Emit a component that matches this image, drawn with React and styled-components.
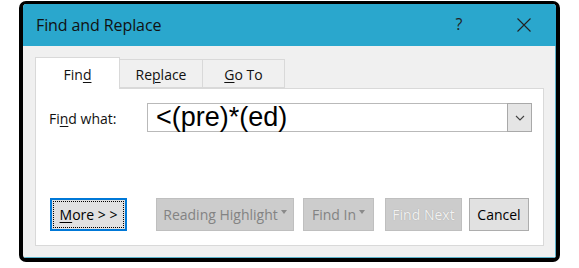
import React from 'react';
import styled, { createGlobalStyle } from 'styled-components';

const Global = createGlobalStyle`
  html, body { margin: 0; padding: 0; background: #fff; }
  body { font-family: "Open Sans", "Noto Sans", sans-serif; color: #000; }
  * { box-sizing: border-box; }
`;

const Page = styled.div`
  width: 579px;
  height: 268px;
  padding: 1px 0 0 19px;
`;

const Dialog = styled.div`
  width: 541px;
  height: 261px;
  border: 4px solid #000;
  border-top-width: 3px;
  border-radius: 7px;
  background: #f0f0f0;
  display: flex;
  flex-direction: column;
  overflow: hidden;
`;

const TitleBar = styled.div`
  height: 42px;
  flex: none;
  background: #2aa7cd;
  display: flex;
  align-items: center;
  padding-left: 13px;
`;

const Title = styled.div`
  flex: 1;
  font-size: 16px;
  color: #111;
  letter-spacing: -0.1px;
  padding-bottom: 1px;
`;

const Help = styled.div`
  font-size: 16px;
  color: #222;
  width: 10px;
  text-align: center;
  margin-right: 53px;
  padding-bottom: 2px;
`;

const CloseIcon = styled.svg`
  width: 14px;
  height: 14px;
  margin-right: 25px;
  display: block;
`;

const Body = styled.div`
  flex: 1;
  display: flex;
  flex-direction: column;
  padding: 11px 11px 11px 12px;
  border-right: 1px solid #5cb3cc;
  border-bottom: 1px solid #5cb3cc;
`;

const TabRow = styled.div`
  display: flex;
  align-items: flex-end;
  height: 31px;
  flex: none;
`;

const Tab = styled.div`
  width: ${p => p.$w}px;
  height: ${p => (p.$active ? 32 : 29)}px;
  margin-bottom: ${p => (p.$active ? -1 : 0)}px;
  position: relative;
  z-index: ${p => (p.$active ? 1 : 0)};
  background: ${p => (p.$active ? '#fff' : '#f0f0f0')};
  border: 1px solid #d9d9d9;
  border-left-width: ${p => (p.$first ? 1 : 0)}px;
  border-bottom-width: ${p => (p.$active ? 0 : 1)}px;
  display: flex;
  align-items: center;
  justify-content: center;
  font-size: 14px;
  padding-top: ${p => (p.$active ? 1 : 2)}px;
  color: #111;
`;

const Accel = styled.span`
  text-decoration: underline;
  text-underline-offset: 2px;
  text-decoration-thickness: 1px;
`;

const Panel = styled.div`
  flex: 1;
  background: #fff;
  border: 1px solid #d9d9d9;
  display: flex;
  flex-direction: column;
`;

const FindRow = styled.div`
  display: flex;
  align-items: center;
  padding: 14px 11px 0 13px;
`;

const Label = styled.div`
  width: 98px;
  font-size: 14px;
  color: #111;
  padding-top: 1px;
`;

const Combo = styled.div`
  flex: 1;
  height: 29px;
  display: flex;
  border: 1px solid #b9b9b9;
  background: #fff;
`;

const ComboText = styled.div`
  flex: 1;
  font-family: "Liberation Sans", Arial, sans-serif;
  font-size: 27px;
  line-height: 27px;
  padding-left: 8px;
  color: #000;
`;

const DropButton = styled.div`
  width: 25px;
  margin: -1px -1px -1px 0;
  background: #e5e5e5;
  border: 1px solid #a9a9a9;
  display: flex;
  align-items: center;
  justify-content: center;
`;

const ButtonRow = styled.div`
  margin-top: auto;
  display: flex;
  align-items: center;
  padding: 0 14px 14px 14px;
`;

const variants = {
  focus: 'background:#e1e1e1;border:2px solid #0078d7;color:#000;padding:1px;',
  normal: 'background:#e1e1e1;border:1px solid #adadad;color:#000;',
  disabled: 'background:#cccccc;border:1px solid #bfbfbf;color:#838383;',
  faded: 'background:#cccccc;border:1px solid #bfbfbf;color:#f2f2f2;text-shadow:0 0 1px #9a9a9a;',
};

const Button = styled.div`
  width: ${p => p.$w}px;
  margin-left: ${p => p.$ml || 0}px;
  height: 33px;
  display: flex;
  align-items: center;
  justify-content: center;
  font-size: 14px;
  white-space: nowrap;
  ${p => variants[p.$variant]}
`;

const FocusRing = styled.div`
  flex: 1;
  align-self: stretch;
  border: 1px dotted #000;
  display: flex;
  align-items: center;
  justify-content: center;
  white-space: pre;
`;

const Caret = styled.span`
  display: inline-block;
  width: 0;
  height: 0;
  margin-left: 3px;
  margin-bottom: 5px;
  border-left: 3.5px solid transparent;
  border-right: 3.5px solid transparent;
  border-top: 4px solid #8a8a8a;
`;

export default function App() {
  return (
    <>
      <Global />
      <Page>
        <Dialog>
          <TitleBar>
            <Title>Find and Replace</Title>
            <Help>?</Help>
            <CloseIcon viewBox="0 0 14 14">
              <path d="M0.5 0.5 L13.5 13.5 M13.5 0.5 L0.5 13.5" stroke="#222" strokeWidth="1.1" fill="none" />
            </CloseIcon>
          </TitleBar>
          <Body>
            <TabRow>
              <Tab $active $first $w={85}>Fin<Accel>d</Accel></Tab>
              <Tab $w={83}>Re<Accel>p</Accel>lace</Tab>
              <Tab $w={82}><Accel>G</Accel>o To</Tab>
            </TabRow>
            <Panel>
              <FindRow>
                <Label>Fi<Accel>n</Accel>d what:</Label>
                <Combo>
                  <ComboText>&lt;(pre)*(ed)</ComboText>
                  <DropButton>
                    <svg width="10" height="6" viewBox="0 0 10 6">
                      <path d="M1 1 L5 5 L9 1" stroke="#444" strokeWidth="1.1" fill="none" />
                    </svg>
                  </DropButton>
                </Combo>
              </FindRow>
              <ButtonRow>
                <Button $variant="focus" $w={77}>
                  <FocusRing><Accel>M</Accel>ore &gt; &gt;</FocusRing>
                </Button>
                <Button $variant="disabled" $w={138} $ml={29}>Reading Highlight<Caret /></Button>
                <Button $variant="disabled" $w={71} $ml={9}>Find In<Caret /></Button>
                <Button $variant="faded" $w={77} $ml={11}>Find Next</Button>
                <Button $variant="normal" $w={60} $ml={7}>Cancel</Button>
              </ButtonRow>
            </Panel>
          </Body>
        </Dialog>
      </Page>
    </>
  );
}
